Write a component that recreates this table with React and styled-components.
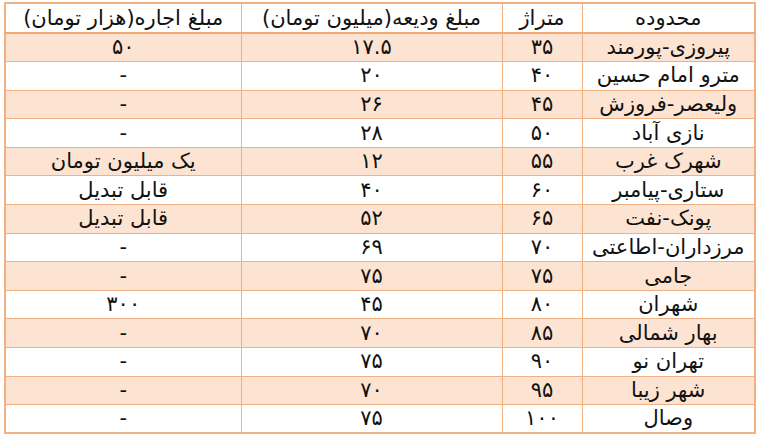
import styled, { createGlobalStyle } from "styled-components"

const GlobalStyle = createGlobalStyle`
  html, body {
    margin: 0;
    padding: 0;
    background: #ffffff;
  }
`

const Page = styled.div`
  padding: 2px 3px 0 4px;
  width: 757px;
  box-sizing: border-box;
`

const Table = styled.table`
  direction: rtl;
  width: 750px;
  table-layout: fixed;
  border-collapse: collapse;
  border: 2px solid #f0b285;
  font-family: "DejaVu Sans", Tahoma, sans-serif;
  font-size: 21px;
  line-height: 1;
  color: #111111;
`

const HeadCell = styled.th`
  font-weight: normal;
  height: 28px;
  padding: 0;
  text-align: center;
  border-left: 1px solid #f0b285;
  border-bottom: 2px solid #f0a875;
  background: #ffffff;
  overflow: hidden;
`

const Row = styled.tr`
  height: 28.6px;
  background: ${props => (props.$shaded ? "#fce3d2" : "#ffffff")};
`

const Cell = styled.td`
  padding: 0;
  text-align: center;
  border-left: 1px solid #f0b285;
  border-bottom: 1px solid #f0b285;
  white-space: nowrap;
  overflow: hidden;
`

const rows = [
  ["پیروزی-پورمند", "۳۵", "۱۷.۵", "۵۰"],
  ["مترو امام حسین", "۴۰", "۲۰", "-"],
  ["ولیعصر-فروزش", "۴۵", "۲۶", "-"],
  ["نازی آباد", "۵۰", "۲۸", "-"],
  ["شهرک غرب", "۵۵", "۱۲", "یک میلیون تومان"],
  ["ستاری-پیامبر", "۶۰", "۴۰", "قابل تبدیل"],
  ["پونک-نفت", "۶۵", "۵۲", "قابل تبدیل"],
  ["مرزداران-اطاعتی", "۷۰", "۶۹", "-"],
  ["جامی", "۷۵", "۷۵", "-"],
  ["شهران", "۸۰", "۴۵", "۳۰۰"],
  ["بهار شمالی", "۸۵", "۷۰", "-"],
  ["تهران نو", "۹۰", "۷۵", "-"],
  ["شهر زیبا", "۹۵", "۷۰", "-"],
  ["وصال", "۱۰۰", "۷۵", "-"],
]

const App = () => {
  return (
    <Page>
      <GlobalStyle />
      <Table>
        <colgroup>
          <col style={{ width: "173px" }} />
          <col style={{ width: "80px" }} />
          <col style={{ width: "261px" }} />
          <col style={{ width: "236px" }} />
        </colgroup>
        <thead>
          <tr>
            <HeadCell>محدوده</HeadCell>
            <HeadCell>متراژ</HeadCell>
            <HeadCell>مبلغ ودیعه(میلیون تومان)</HeadCell>
            <HeadCell>مبلغ اجاره(هزار تومان)</HeadCell>
          </tr>
        </thead>
        <tbody>
          {rows.map((r, i) => (
            <Row key={r[0]} $shaded={i % 2 === 0}>
              {r.map((v, j) => (
                <Cell key={j}>{v}</Cell>
              ))}
            </Row>
          ))}
        </tbody>
      </Table>
    </Page>
  )
}

export default App
